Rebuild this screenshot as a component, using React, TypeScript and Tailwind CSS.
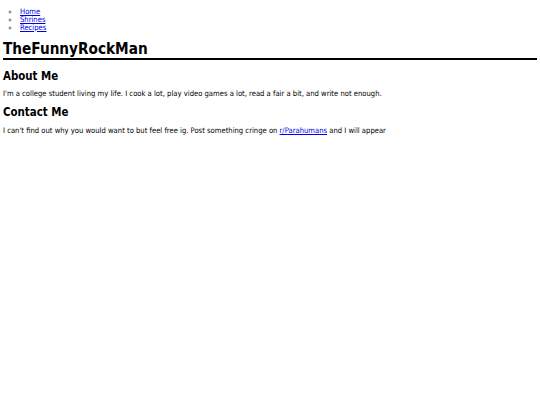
export default function App() {
  return (
    <div className="min-h-[405px] bg-white px-[3px] pt-[8px] text-black text-[7.6px] leading-[8px]" style={{ fontFamily: '"DejaVu Sans Condensed", "DejaVu Sans", Verdana, sans-serif' }}>
      <ul className="list-[circle] pl-[17px] marker:text-gray-500">
        <li><a href="#" className="text-[#0000ee] underline">Home</a></li>
        <li><a href="#" className="text-[#0000ee] underline">Shrines</a></li>
        <li><a href="#" className="text-[#0000ee] underline">Recipes</a></li>
      </ul>
      <h1 className="mt-[9px] border-b-2 border-black pb-[1px] text-[15.2px] font-bold leading-[16px]">TheFunnyRockMan</h1>
      <h2 className="mt-[10px] text-[11.4px] font-bold leading-[12px]">About Me</h2>
      <p className="mt-[8px]">I'm a college student living my life. I cook a lot, play video games a lot, read a fair a bit, and write not enough.</p>
      <h2 className="mt-[8px] text-[11.4px] font-bold leading-[12px]">Contact Me</h2>
      <p className="mt-[9px]">
        I can't find out why you would want to but feel free ig. Post something cringe on{" "}
        <a href="#" className="text-[#0000ee] underline">r/Parahumans</a> and I will appear
      </p>
    </div>
  );
}
